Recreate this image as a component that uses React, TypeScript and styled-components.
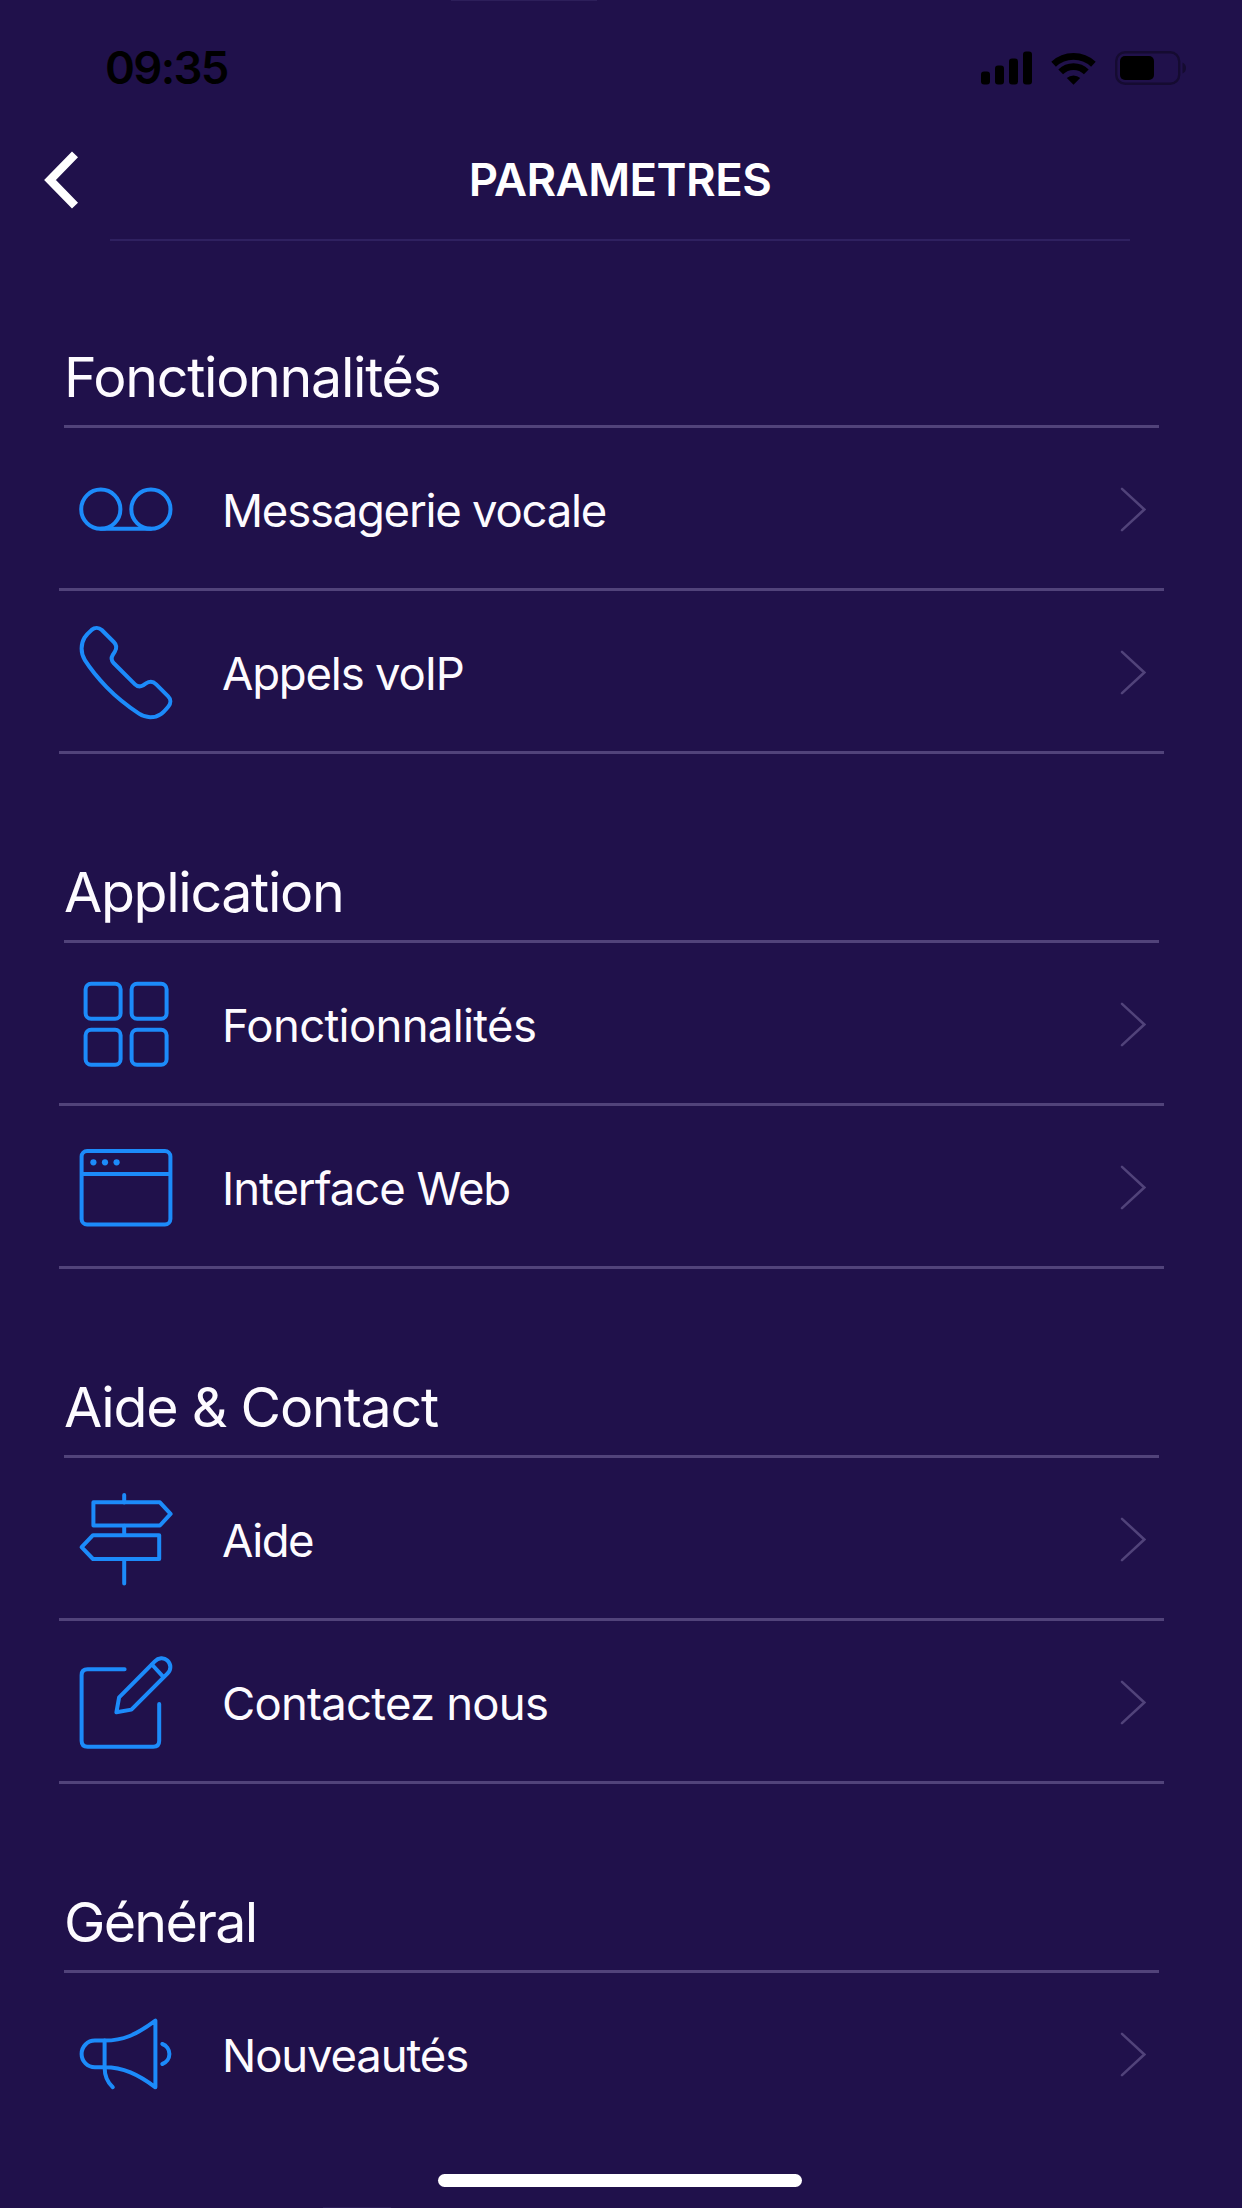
import React from "react";
import styled, { createGlobalStyle } from "styled-components";

const GlobalStyle = createGlobalStyle`
  *, *::before, *::after { box-sizing: border-box; }
  body { margin: 0; background: #20114b; }
`;

const LINE = "#51437a";

const Screen = styled.div`
  display: flex;
  flex-direction: column;
  width: 1242px;
  height: 2208px;
  overflow: hidden;
  background: #20114b;
  color: #fdfbff;
  font-family: Inter, "Liberation Sans", sans-serif;
`;

const EdgeMark = styled.div<{ $left: number; $width: number }>`
  flex: none;
  width: ${(p) => p.$width}px;
  height: 1px;
  margin-left: ${(p) => p.$left}px;
  background: #2d1f5a;
`;

const StatusBar = styled.header`
  display: flex;
  flex: none;
  align-items: center;
  justify-content: space-between;
  height: 133px;
  padding: 0 55px 0 105px;
  color: #000;
`;

const Clock = styled.time`
  font-size: 45.5px;
  font-weight: 600;
  line-height: 56px;
  letter-spacing: -1.7px;
`;

const StatusIcons = styled.div`
  display: flex;
  align-items: center;
  gap: 19px;
`;

const NavBar = styled.nav`
  display: grid;
  flex: none;
  grid-template-columns: 110px 1fr 112px;
  align-items: center;
  height: 104px;
  padding-bottom: 12px;
`;

const BackButton = styled.button`
  display: flex;
  align-items: center;
  height: 92px;
  margin: 0;
  padding: 0 0 0 43px;
  border: 0;
  background: none;
`;

const Title = styled.h1`
  margin: 0;
  color: #fff;
  font-size: 45.5px;
  font-weight: 600;
  line-height: 60px;
  letter-spacing: -0.55px;
  text-align: center;
`;

const NavRule = styled.div`
  flex: none;
  height: 2px;
  margin: 1px 112px 0 110px;
  background: #2f2160;
`;

const Content = styled.main`
  flex: 1;
  min-height: 0;
  overflow: hidden;
`;

const SectionTitle = styled.h2<{ $tracking: number }>`
  display: flex;
  align-items: flex-end;
  height: 187px;
  margin: 0 83px 0 64px;
  padding: 0 0 14px;
  border-bottom: 3px solid ${LINE};
  font-size: 55.5px;
  font-weight: 400;
  line-height: 68px;
  letter-spacing: ${(p) => p.$tracking}px;
`;

const SectionBlock = styled.section`
  &:not(:first-child) ${SectionTitle} {
    height: 189px;
  }
`;

const Row = styled.a<{ $last?: boolean }>`
  display: grid;
  grid-template-columns: 94px 1fr 26px;
  column-gap: 48px;
  align-items: center;
  height: 163px;
  margin: 0 78px 0 59px;
  padding: 3px 18px 0 21px;
  border-bottom: 3px solid ${(p) => (p.$last ? "transparent" : LINE)};
`;

const RowLabel = styled.span<{ $tracking: number }>`
  padding-top: 3px;
  font-size: 45.5px;
  line-height: 56px;
  letter-spacing: ${(p) => p.$tracking}px;
  white-space: nowrap;
`;

const HomeBar = styled.footer`
  display: flex;
  flex: none;
  justify-content: center;
  height: 34px;
  padding-top: 1px;
`;

const HomeIndicator = styled.div`
  width: 364px;
  height: 13px;
  margin-left: -2px;
  border-radius: 7px;
  background: #fff;
`;

const LineIcon = styled.svg.attrs({ width: 94, height: 93, viewBox: "0.4 0 94 93" })`
  display: block;
  overflow: visible;
  fill: none;
  stroke: #1c8bfa;
  stroke-width: 4;
  stroke-linecap: round;
  stroke-linejoin: round;
`;

const VoicemailIcon = () => (
  <LineIcon>
    <circle cx="21.2" cy="46.2" r="19.6" />
    <circle cx="71.3" cy="46.2" r="19.6" />
    <path d="M21.2 65.8H71.3" />
  </LineIcon>
);

const PhoneIcon = () => (
  <LineIcon>
    <path d="M12 3.9C15.2 1.2 19.2 1.3 22.2 4L34.2 16C37 18.8 37.4 22.2 35.2 25.7L33.2 28.9C31.6 31.5 31.8 34.7 34 37L55.4 58.3C57.7 60.6 60.9 60.8 63.6 59.2L66.4 57.4C69.8 55.2 73.8 55.5 76.6 58.3L88.6 70.3C91.5 73.2 91.4 77.2 88.8 80.4C83.9 86.4 79.8 91.2 70.5 91.2C66 91.2 62.6 89.8 59.4 87.7C47 79.5 36.5 71 27 61.2C18.3 52.1 11.5 43.9 5.3 34.2C3.1 30.7 2 27 2 22.6C2 13.5 6.5 8.6 12 3.9Z" />
  </LineIcon>
);

const GridIcon = () => (
  <LineIcon>
    <rect x="6" y="5.7" width="35" height="35" rx="5.5" />
    <rect x="52" y="5.7" width="35" height="35" rx="5.5" />
    <rect x="6" y="51.7" width="35" height="35" rx="5.5" />
    <rect x="52" y="51.7" width="35" height="35" rx="5.5" />
  </LineIcon>
);

const BrowserIcon = () => (
  <LineIcon>
    <rect x="2" y="10" width="88.8" height="73.5" rx="5.5" />
    <path d="M3 33H90" />
    <g fill="#1c8bfa" stroke="none">
      <circle cx="13.8" cy="21.3" r="3.1" />
      <circle cx="25.4" cy="21.3" r="3.1" />
      <circle cx="37" cy="21.3" r="3.1" />
    </g>
  </LineIcon>
);

const SignpostIcon = () => (
  <LineIcon>
    <path d="M44.6 2V9.5M44.6 32.7V42M44.6 66V90.5" />
    <path d="M13.8 9.3H80.3L91 20.9L80.3 32.5H13.8Z" />
    <path d="M79.6 42.2H13.4L2 54.1L13.4 66H79.6Z" />
  </LineIcon>
);

const ComposeIcon = () => (
  <LineIcon>
    <path d="M45 13.3H8Q2 13.3 2 19.3V84.7Q2 90.7 8 90.7H73.6Q79.6 90.7 79.6 84.7V48" />
    <path d="M36.8 56.3L39.5 41.3L75.2 5.4C78.8 1.7 84.2 1.2 87.8 4.5C91.7 8.2 91.7 13.6 88 17.4L51.8 53.6Z" />
    <path d="M72.3 8.5L83.7 20.8" />
  </LineIcon>
);

const MegaphoneIcon = () => (
  <LineIcon>
    <path d="M25 32.6H15.3A13.3 13.3 0 0 0 15.3 59.2H25" />
    <path d="M25 32.6C43.5 32.6 56.5 27 75.8 12.7V79.3C58.5 66.5 43.5 59.2 25 59.2Z" />
    <path d="M25 59.2C25 68 27.8 74.3 33.2 79.2" />
    <path d="M82.7 36A10.6 10.6 0 0 1 82.7 56" />
  </LineIcon>
);

const Chevron = () => (
  <svg width="26" height="45" viewBox="0 0 26 45" fill="none" stroke="#51437a" strokeWidth="2.5" strokeLinecap="round">
    <path d="M2 1.8L24.3 22.5L2 43.2" />
  </svg>
);

const BackArrow = () => (
  <svg width="37" height="58" viewBox="0 0 37 58" fill="none" stroke="#fff" strokeWidth="8.4">
    <path d="M32 3.4L7 29L32 54.6" />
  </svg>
);

const SignalIcon = () => (
  <svg width="51" height="34" viewBox="0 0 51 34">
    <rect x="0" y="20.5" width="9" height="13" rx="3" />
    <rect x="14" y="14.5" width="9" height="19" rx="3" />
    <rect x="28" y="7.5" width="9" height="26" rx="3" />
    <rect x="42" y="0.5" width="9" height="33" rx="3" />
  </svg>
);

const WifiIcon = () => (
  <svg width="45" height="34" viewBox="0 0 45 34" fill="none" stroke="#000" strokeWidth="6.8">
    <path d="M2.6 13.2A29.2 29.2 0 0 1 42.4 13.2" />
    <path d="M9.7 20.9A18.4 18.4 0 0 1 35.3 20.9" />
    <path d="M22.5 33.8L15.8 27A10 10 0 0 1 29.2 27Z" fill="#000" stroke="none" />
  </svg>
);

const BatteryIcon = () => (
  <svg width="72" height="34" viewBox="0 0 72 34">
    <rect x="1.2" y="1.2" width="63" height="31.6" rx="9" fill="none" stroke="#150b31" strokeWidth="2.4" />
    <rect x="5" y="5" width="34" height="24" rx="5" />
    <path d="M67.5 11.5Q71 13 71 17Q71 21 67.5 22.5Z" fill="#150b31" />
  </svg>
);

const sections = [
  {
    title: "Fonctionnalités",
    tracking: -1.3,
    rows: [
      { label: "Messagerie vocale", tracking: -1.25, Icon: VoicemailIcon },
      { label: "Appels voIP", tracking: -1.2, Icon: PhoneIcon },
    ],
  },
  {
    title: "Application",
    tracking: -1.35,
    rows: [
      { label: "Fonctionnalités", tracking: -0.7, Icon: GridIcon },
      { label: "Interface Web", tracking: -1.05, Icon: BrowserIcon },
    ],
  },
  {
    title: "Aide & Contact",
    tracking: -1.25,
    rows: [
      { label: "Aide", tracking: -1.5, Icon: SignpostIcon },
      { label: "Contactez nous", tracking: -0.8, Icon: ComposeIcon },
    ],
  },
  {
    title: "Général",
    tracking: -1.7,
    rows: [{ label: "Nouveautés", tracking: -1.15, Icon: MegaphoneIcon, last: true }],
  },
];

export default function App() {
  return (
    <Screen>
      <GlobalStyle />
      <EdgeMark $left={451} $width={146} />
      <StatusBar>
        <Clock>09:35</Clock>
        <StatusIcons>
          <SignalIcon />
          <WifiIcon />
          <BatteryIcon />
        </StatusIcons>
      </StatusBar>
      <NavBar>
        <BackButton aria-label="Retour">
          <BackArrow />
        </BackButton>
        <Title>PARAMETRES</Title>
      </NavBar>
      <NavRule />
      <Content>
        {sections.map((section) => (
          <SectionBlock key={section.title}>
            <SectionTitle $tracking={section.tracking}>{section.title}</SectionTitle>
            {section.rows.map(({ label, tracking, Icon, ...rest }) => (
              <Row key={label} $last={"last" in rest}>
                <Icon />
                <RowLabel $tracking={tracking}>{label}</RowLabel>
                <Chevron />
              </Row>
            ))}
          </SectionBlock>
        ))}
      </Content>
      <HomeBar>
        <HomeIndicator />
      </HomeBar>
      <EdgeMark $left={323} $width={68} />
    </Screen>
  );
}
